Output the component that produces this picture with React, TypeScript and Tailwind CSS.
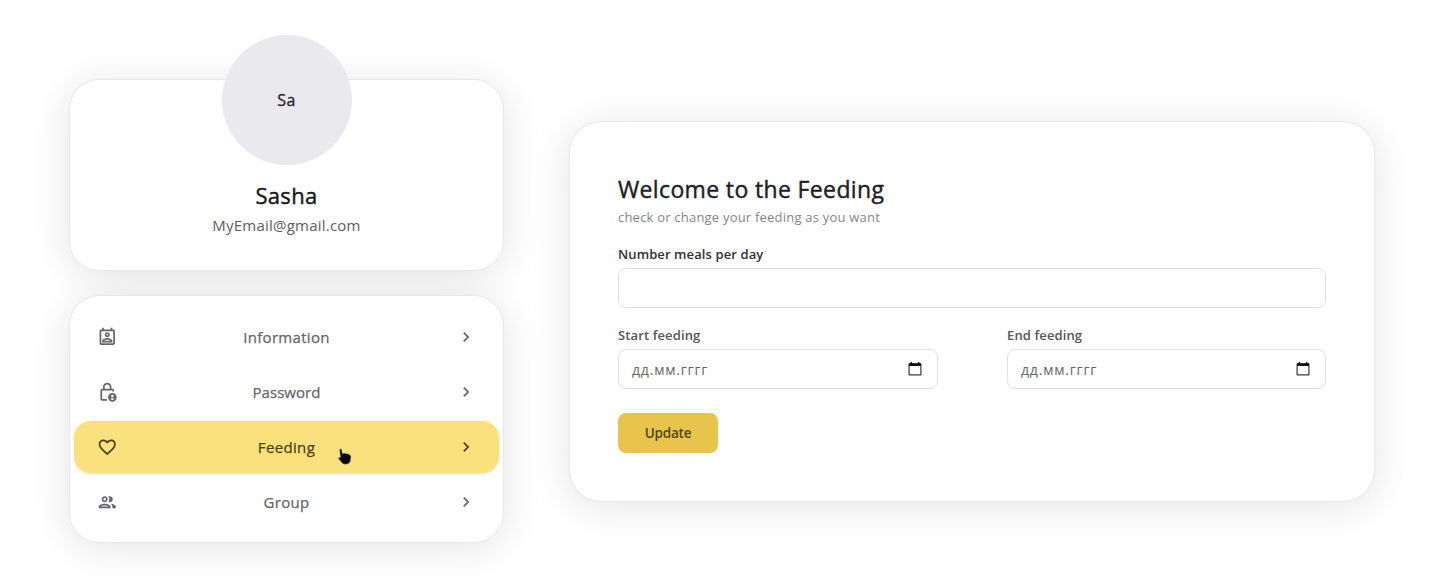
import React from "react";
import {
  MdOutlinePermContactCalendar,
  MdOutlineLockPerson,
  MdFavoriteBorder,
  MdOutlineGroup,
  MdChevronRight,
} from "react-icons/md";

const cardShadow = "border border-[#e7e8e9] bg-white shadow-[0_5px_40px_rgba(0,0,0,0.11)]";

const items = [
  { label: "Information", Icon: MdOutlinePermContactCalendar, active: false, text: "tracking-[0.3px]" },
  { label: "Password", Icon: MdOutlineLockPerson, active: false, text: "tracking-[0.05px]" },
  { label: "Feeding", Icon: MdFavoriteBorder, active: true, text: "tracking-[0.35px]" },
  { label: "Group", Icon: MdOutlineGroup, active: false, text: "tracking-[0.3px]" },
];

function Pointer() {
  return (
    <svg className="absolute left-[263px] top-[26px] h-[20px] w-[17px]" viewBox="0 0 17 20">
      <path
        d="M3.2 2c.8-.4 1.5.1 1.6.9l.6 3.6 1.9-.5 1.7.5 1.8.2 1.6.8c1.1.6 1.7 1.5 1.6 2.8l-.4 3.4c-.5 2.2-2 3.5-4.2 3.5H7.7c-1.4 0-2.3-.6-3.1-1.7l-3-3.6c-.8-1.1.2-2 1.3-1.6l.5.3-.9-7.3c-.1-.6.1-1 .7-1.3z"
        fill="#000"
        stroke="#d9caa0"
        strokeWidth="0.6"
      />
    </svg>
  );
}

function CalendarGlyph() {
  return (
    <svg className="h-[14px] w-[14px]" viewBox="0 0 14 14" fill="none">
      <path d="M1.1 2.2h11.8v10.6H1.1z" stroke="#3a3a3a" strokeWidth="1.2" strokeLinejoin="round" />
      <path d="M1 1.3h12v2.6H1zM2.6 0H4v2H2.6zM10 0h1.4v2H10z" fill="#111" />
    </svg>
  );
}

function DateField({ label }: { label: string }) {
  return (
    <div className="flex flex-col">
      <label className="h-[19px] text-[13px] leading-[19px] font-semibold tracking-[0.12px] whitespace-nowrap text-[#55555a]">{label}</label>
      <div className="mt-[4px] flex h-[40px] items-center justify-between rounded-lg border border-[#e2e2e2] pr-[15px] pl-[13px]">
        <span className="pt-px text-[14px] tracking-[0.8px] text-[#666]">дд.мм.гггг</span>
        <CalendarGlyph />
      </div>
    </div>
  );
}

export default function App() {
  return (
    <main className="flex h-[584px] w-[1431px] items-start overflow-hidden bg-white font-['Open_Sans','Noto_Sans',sans-serif] text-[#202027]">
      <div className="ml-[69px] flex w-[435px] flex-col gap-[24px] pt-[79px]">
        <section className={`flex h-[192px] flex-col items-center rounded-[30px] ${cardShadow}`}>
          <div className="-mt-[45px] flex h-[130px] w-[130px] shrink-0 items-center justify-center rounded-full bg-[#eae9ee] text-[16px] tracking-[0.4px] text-[#29292e] [-webkit-text-stroke:0.35px]">
            Sa
          </div>
          <h2 className="mt-[14px] text-[22px] leading-[32px] tracking-[0.35px] text-[#18181c] [-webkit-text-stroke:0.4px]">Sasha</h2>
          <p className="mt-[2px] text-[15px] leading-[24px] tracking-[0.22px] text-[#5d5d62]">MyEmail@gmail.com</p>
        </section>
        <nav className={`flex h-[248px] flex-col gap-[3px] rounded-[30px] px-[4px] pt-[15px] ${cardShadow}`}>
          {items.map(({ label, Icon, active, text }) => (
            <div
              key={label}
              className={
                active
                  ? "relative flex h-[52px] shrink-0 items-center justify-between rounded-[17px] bg-[#fae17e] pr-[23px] pl-[22.5px] text-[#4c3f14] shadow-[0_1px_3px_rgba(190,165,80,0.35)]"
                  : "relative flex h-[52px] shrink-0 items-center justify-between rounded-[17px] pr-[23px] pl-[22.5px] text-[#65656a]"
              }
            >
              <Icon className="h-[20.5px] w-[20.5px]" />
              <span className={`text-[15px] [-webkit-text-stroke:0.25px] ${text}`}>{label}</span>
              <MdChevronRight className="h-[20px] w-[20px]" />
              {active && <Pointer />}
            </div>
          ))}
        </nav>
      </div>
      <section className={`mt-[121px] ml-[65px] flex h-[381px] w-[806px] flex-col rounded-[32px] px-[48px] pt-[50px] ${cardShadow}`}>
        <h1 className="text-[23px] leading-[34px] tracking-[0.36px] whitespace-nowrap text-[#202024] [-webkit-text-stroke:0.4px]">Welcome to the Feeding</h1>
        <p className="mt-px text-[13px] leading-[20px] tracking-[0.21px] text-[#85858a]">check or change your feeding as you want</p>
        <label className="mt-[18px] h-[19px] text-[13px] leading-[19px] font-semibold tracking-[0.1px] text-[#303035]">Number meals per day</label>
        <div className="mt-[4px] h-[40px] shrink-0 rounded-lg border border-[#e2e2e2]" />
        <div className="mt-[18px] grid grid-cols-[320px_319px] justify-between">
          <DateField label="Start feeding" />
          <DateField label="End feeding" />
        </div>
        <button className="mt-[24px] h-[40px] w-[100px] rounded-lg bg-[#e8c44d] text-[13.5px] font-semibold tracking-[-0.2px] text-[#54431a]">
          Update
        </button>
      </section>
    </main>
  );
}
